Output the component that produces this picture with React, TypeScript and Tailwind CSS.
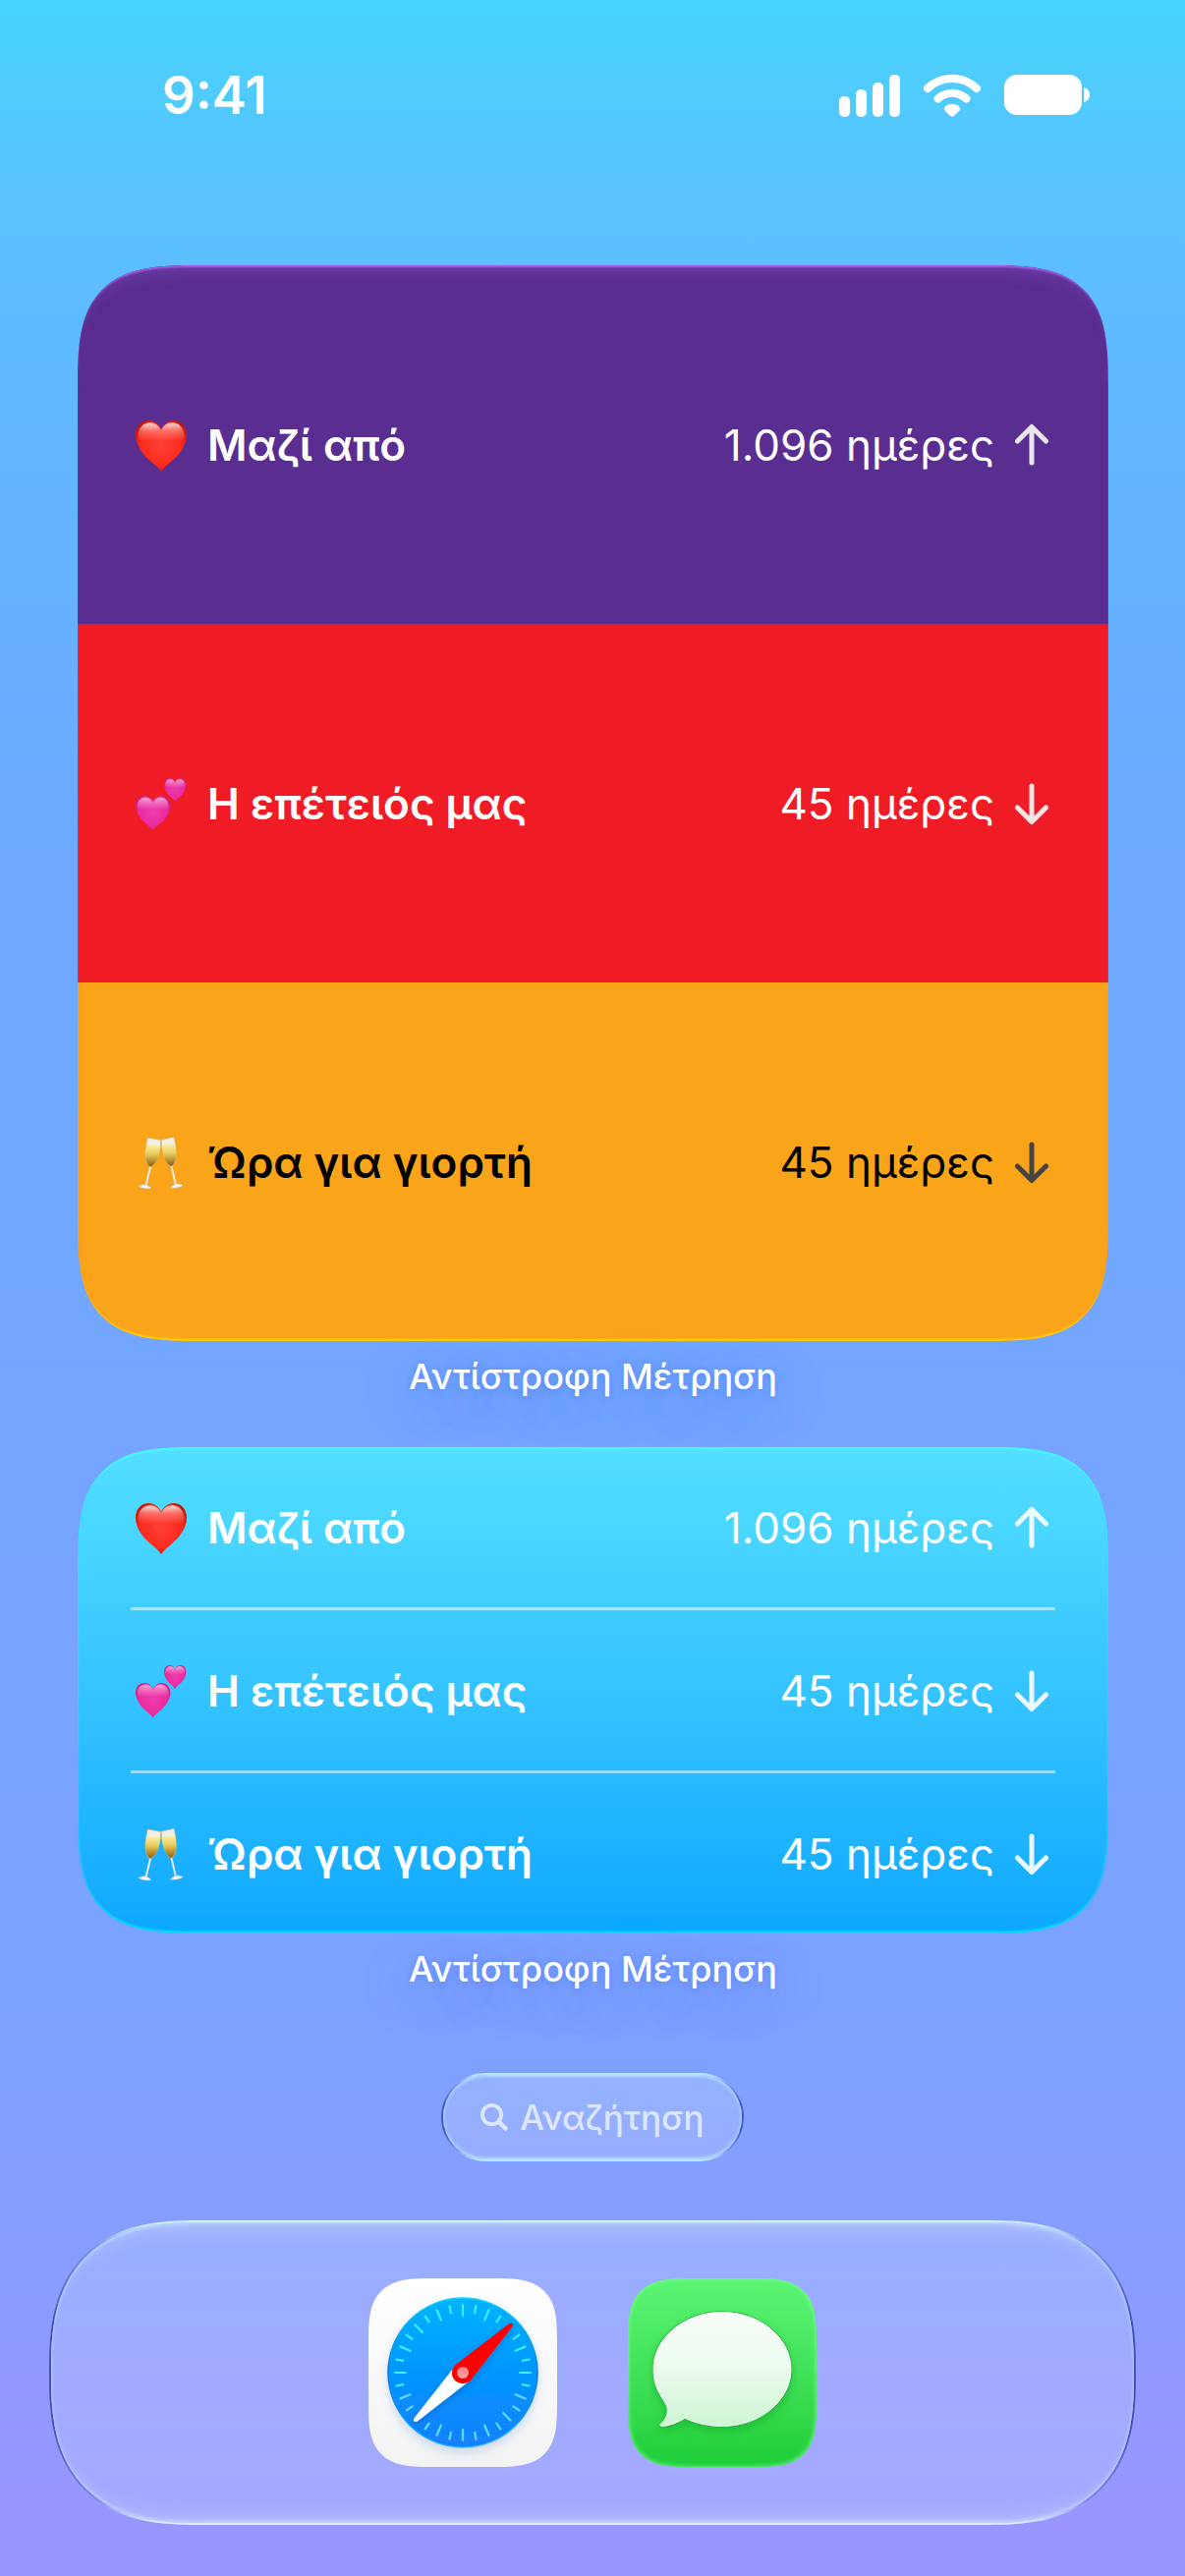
type Counter = {
  icon: "heart" | "hearts" | "toast";
  title: string;
  value: string;
  direction: "up" | "down";
  rowClass: string;
  arrowClass: string;
};

const counters: Counter[] = [
  {
    icon: "heart",
    title: "Μαζί από",
    value: "1.096 ημέρες",
    direction: "up",
    rowClass: "bg-[#5a2d91] text-white",
    arrowClass: "text-[#e9e6ec]",
  },
  {
    icon: "hearts",
    title: "Η επέτειός μας",
    value: "45 ημέρες",
    direction: "down",
    rowClass: "bg-[#ef1c25] text-white",
    arrowClass: "text-[#f3e4e6]",
  },
  {
    icon: "toast",
    title: "Ώρα για γιορτή",
    value: "45 ημέρες",
    direction: "down",
    rowClass: "bg-[#faa41a] text-black",
    arrowClass: "text-[#444444]",
  },
];

const HEART =
  "M26 52C22 45.5 14 42 7 33C2.5 27 0 21 0 14.5C0 6 6 0 13.5 0C19 0 23.5 3.5 26 9C28.5 3.5 33 0 38.5 0C46 0 52 6 52 14.5C52 21 49.5 27 45 33C38 42 30 45.5 26 52Z";

function Heart({ id, pink }: { id: string; pink?: boolean }) {
  return (
    <>
      <defs>
        <radialGradient id={`${id}-body`} cx="0.5" cy="0.48" r="0.62">
          <stop offset="0" stopColor={pink ? "#f03cab" : "#ff4136"} />
          <stop offset="0.65" stopColor={pink ? "#ea2ba0" : "#fb2a1c"} />
          <stop offset="1" stopColor={pink ? "#c4187d" : "#b80d00"} />
        </radialGradient>
        <linearGradient id={`${id}-shine`} x1="0" y1="0" x2="0" y2="1">
          <stop offset="0" stopColor="#fff" stopOpacity={pink ? 0.6 : 0.85} />
          <stop offset="0.18" stopColor="#fff" stopOpacity="0.3" />
          <stop offset="0.4" stopColor="#fff" stopOpacity="0" />
        </linearGradient>
      </defs>
      <path d={HEART} fill={`url(#${id}-body)`} />
      <path d={HEART} fill={`url(#${id}-shine)`} transform="translate(2.6 2.2) scale(0.9)" />
    </>
  );
}

function Glass({ id }: { id: string }) {
  return (
    <>
      <path d="M11 3L23 5.5C22.5 16 20 30 13.5 33C7.5 30 8.5 15 11 3Z" fill="#f1efe6" stroke="#c9b98a" strokeWidth="0.7" />
      <path d="M10.2 9.5C14 12 18 8.5 22.6 11C21.8 21 19 30.5 13.5 32.5C8 30 8.6 18 10.2 9.5Z" fill={`url(#${id})`} />
      <path d="M13.4 33L9.3 52" stroke="#e9e9ee" strokeWidth="1.8" />
      <path d="M2.5 52.5C5 51 7 50.5 9.5 51C12 52 13 53 14.5 54.5C10 55.5 5 54.5 2.5 52.5Z" fill="#f4f4f7" stroke="#b9b9c4" strokeWidth="0.5" />
    </>
  );
}

function Emoji({ name, id }: { name: Counter["icon"]; id: string }) {
  if (name === "heart") {
    return (
      <svg viewBox="0 0 56 56" className="size-14 shrink-0" aria-hidden="true">
        <g transform="translate(3 3)">
          <Heart id={id} />
        </g>
      </svg>
    );
  }
  if (name === "hearts") {
    return (
      <svg viewBox="0 0 56 56" className="size-14 shrink-0" aria-hidden="true">
        <g transform="translate(32 2) scale(0.43 0.46)">
          <Heart id={`${id}-small`} pink />
        </g>
        <g transform="translate(3 20) scale(0.68)">
          <Heart id={`${id}-big`} pink />
        </g>
      </svg>
    );
  }
  return (
    <svg viewBox="0 0 56 56" className="size-14 shrink-0" fill="none" aria-hidden="true">
      <defs>
        <linearGradient id={`${id}-wine`} x1="0" y1="0" x2="0" y2="1">
          <stop offset="0" stopColor="#fff3a8" />
          <stop offset="0.45" stopColor="#e6c95c" />
          <stop offset="1" stopColor="#8f5f0a" />
        </linearGradient>
      </defs>
      <g transform="matrix(1.12 0 0 1 3 0)">
        <Glass id={`${id}-wine`} />
      </g>
      <g transform="matrix(-1.08 0.03 0 1 54 -1)">
        <Glass id={`${id}-wine`} />
      </g>
    </svg>
  );
}

function Arrow({ direction, className }: { direction: "up" | "down"; className: string }) {
  return (
    <svg
      viewBox="0 0 44 44"
      className={`size-11 shrink-0 ${className}`}
      fill="none"
      stroke="currentColor"
      strokeWidth="5"
      strokeLinecap="round"
      strokeLinejoin="round"
      role="img"
      aria-label={direction}
    >
      {direction === "up" ? (
        <path d="M22 40V4M7.5 18L22 3.5L36.5 18" />
      ) : (
        <path d="M22 4V40M7.5 26L22 40.5L36.5 26" />
      )}
    </svg>
  );
}

function CounterRow({ counter, id, arrowClass }: { counter: Counter; id: string; arrowClass: string }) {
  return (
    <div className="flex flex-1 items-center justify-between px-14 text-[44px] leading-[56px]">
      <div className="flex items-center gap-5">
        <Emoji name={counter.icon} id={id} />
        <span className="font-semibold">{counter.title}</span>
      </div>
      <div className="flex items-center gap-4">
        <span>{counter.value}</span>
        <Arrow direction={counter.direction} className={arrowClass} />
      </div>
    </div>
  );
}

function WidgetLabel() {
  return (
    <h2 className="relative mt-3 text-center text-[36px] leading-12 font-medium text-white [text-shadow:0_1px_6px_rgba(40,100,230,0.3),0_14px_56px_rgba(30,110,255,0.42)]">
      Αντίστροφη Μέτρηση
    </h2>
  );
}

const widgetShape =
  "relative overflow-hidden rounded-[84px] supports-[corner-shape:squircle]:rounded-[126px] supports-[corner-shape:squircle]:[corner-shape:superellipse(1.65)]";

function StatusBar() {
  return (
    <header className="flex items-center justify-between pr-[96px] pl-[165px] text-white">
      <time className="py-16 text-[53px] leading-[66px] font-semibold">9:41</time>
      <div className="flex items-center gap-6">
        <svg viewBox="0 0 62 43" className="h-[43px] w-[62px]" fill="currentColor" aria-label="signal">
          <rect x="0" y="22" width="11" height="21" rx="5" />
          <rect x="17" y="15" width="11" height="28" rx="5" />
          <rect x="34" y="8" width="11" height="35" rx="5" />
          <rect x="51" y="0" width="11" height="43" rx="5" />
        </svg>
        <svg viewBox="0 0 58 43" className="h-[43px] w-[58px]" fill="none" aria-label="wifi">
          <path d="M4 14A36 36 0 0 1 54 14" stroke="currentColor" strokeWidth="8" strokeLinecap="round" />
          <path d="M14.5 24.5A21 21 0 0 1 43.5 24.5" stroke="currentColor" strokeWidth="8" strokeLinecap="round" />
          <path
            d="M29 30C33 30 36 31.5 37 34C37.5 35.5 36.5 36.5 35.5 37.5L31 41.8C29.7 43 28.3 43 27 41.8L22.5 37.5C21.5 36.5 20.5 35.5 21 34C22 31.5 25 30 29 30Z"
            fill="currentColor"
          />
        </svg>
        <svg viewBox="0 0 88 43" className="h-[43px] w-[88px]" fill="currentColor" aria-label="battery">
          <rect x="0" y="0" width="79" height="41" rx="13" />
          <path d="M81 13C85 14 87 17 87 20.5S85 27 81 28Z" />
        </svg>
      </div>
    </header>
  );
}

const ticks = Array.from({ length: 32 }, (_, i) => i).filter((i) => i !== 4 && i !== 20);

function SafariIcon() {
  return (
    <svg viewBox="0 0 192 192" className="size-full" aria-hidden="true">
      <defs>
        <linearGradient id="compass" x1="0" y1="0" x2="0" y2="1">
          <stop offset="0" stopColor="#00b4ff" />
          <stop offset="0.5" stopColor="#0096ff" />
          <stop offset="1" stopColor="#1580ff" />
        </linearGradient>
        <linearGradient id="compass-rim" x1="0" y1="0" x2="0" y2="1">
          <stop offset="0" stopColor="#12d8ff" />
          <stop offset="0.5" stopColor="#0672e0" />
          <stop offset="1" stopColor="#22b4ff" />
        </linearGradient>
        <linearGradient id="compass-hub" x1="0" y1="0" x2="0" y2="1">
          <stop offset="0" stopColor="#ff7d84" />
          <stop offset="1" stopColor="#ffa5a5" />
        </linearGradient>
        <filter id="compass-shadow" x="-20%" y="-20%" width="140%" height="140%">
          <feDropShadow dx="0" dy="5" stdDeviation="5" floodColor="#1a66d0" floodOpacity="0.2" />
        </filter>
        <filter id="needle-shadow" x="-20%" y="-20%" width="140%" height="140%">
          <feDropShadow dx="0" dy="3" stdDeviation="3" floodColor="#003a90" floodOpacity="0.3" />
        </filter>
      </defs>
      <circle cx="96" cy="96" r="76" fill="url(#compass)" stroke="url(#compass-rim)" strokeWidth="1.5" filter="url(#compass-shadow)" />
      {ticks.map((i) => (
        <line
          key={i}
          x1="96"
          y1="27"
          x2="96"
          y2={i % 2 === 0 ? 38 : 34}
          stroke={i > 9 && i < 23 ? "#62dbff" : "#3cf0ff"}
          strokeWidth="2.2"
          strokeLinecap="round"
          transform={`rotate(${i * 11.25} 96 96)`}
        />
      ))}
      <g filter="url(#needle-shadow)">
        <path d="M86 92L46.3 142.5C45 145 47 147 49.5 145.7L102 105Z" fill="#fdfeff" />
        <path d="M88.5 88L143 46.3C145.8 44.5 148 46.5 146.7 49L104.5 103A11 11 0 1 1 88.5 88Z" fill="#ff0000" />
      </g>
      <circle cx="96" cy="96" r="6" fill="url(#compass-hub)" />
    </svg>
  );
}

const BUBBLE =
  "M96 34.5C134.7 34.5 166 60.5 166 92.5S134.7 150.5 96 150.5C82 150.5 69 147.5 58 142.3C51 147 41 150.5 34 150.5C32.5 150.5 32.5 148.7 33.5 148C38 144.5 40.5 139 40.3 133.5C40 128 34 122 30 113C27 106 26 99 26 92.5C26 60.5 57.3 34.5 96 34.5Z";

function MessagesIcon() {
  return (
    <svg viewBox="0 0 192 192" className="size-full" aria-hidden="true">
      <defs>
        <linearGradient id="bubble" x1="0" y1="0" x2="0" y2="1">
          <stop offset="0" stopColor="#f7fdf8" />
          <stop offset="0.45" stopColor="#eefbf0" />
          <stop offset="1" stopColor="#cdf5d3" />
        </linearGradient>
        <filter id="bubble-shadow" x="-20%" y="-20%" width="140%" height="140%">
          <feDropShadow dx="0" dy="4" stdDeviation="5" floodColor="#0a8a20" floodOpacity="0.35" />
        </filter>
      </defs>
      <path d={BUBBLE} fill="url(#bubble)" stroke="#16a92c" strokeWidth="2" filter="url(#bubble-shadow)" />
      <path d={BUBBLE} fill="url(#bubble)" stroke="#fff" strokeWidth="1" />
    </svg>
  );
}

const appShape =
  "size-48 overflow-hidden rounded-[44px] supports-[corner-shape:squircle]:rounded-[66px] supports-[corner-shape:squircle]:[corner-shape:superellipse(1.65)]";

export default function App() {
  return (
    <div className="flex min-h-screen flex-col bg-linear-[180deg,#46d4fb_0%,#56c5ff_6%,#5fbcff_12%,#6aadff_27%,#73a5ff_53%,#7ba2ff_75%,#859eff_86%,#9a95ff_98%] font-['Inter','Liberation_Sans',sans-serif]">
      <StatusBar />

      <main className="mt-19 flex flex-col pr-[78px] pl-[79px]">
        <section className={widgetShape}>
          {counters.map((c) => (
            <div key={c.title} className={`flex min-h-[365px] ${c.rowClass}`}>
              <CounterRow counter={c} id={`large-${c.icon}`} arrowClass={c.arrowClass} />
            </div>
          ))}
          <div className="pointer-events-none absolute inset-0 rounded-[inherit] [corner-shape:inherit] shadow-[inset_0_3px_2px_-1px_#a65ff2,inset_0_-3px_2px_-1px_#ffd500,inset_0_16px_16px_-10px_rgba(150,100,200,0.35)]" />
        </section>
        <WidgetLabel />

        <section className={`mt-12 bg-linear-to-b from-[#53dfff] to-[#0aa8ff] text-white ${widgetShape}`}>
          {counters.map((c, i) => (
            <div key={c.title}>
              {i > 0 && <hr className="mx-[54px] border-t-3 border-white/50" />}
              <div className="flex min-h-[163px]">
                <CounterRow counter={c} id={`medium-${c.icon}`} arrowClass="text-white/90" />
              </div>
            </div>
          ))}
          <div className="pointer-events-none absolute inset-0 rounded-[inherit] [corner-shape:inherit] shadow-[inset_0_3px_2px_-1px_#48ffff,inset_0_-3px_2px_-1px_#00e4ff,inset_0_0_3px_rgba(60,240,255,0.8)]" />
        </section>
        <WidgetLabel />
      </main>

      <button
        type="button"
        className="mx-auto mt-[82px] flex h-[90px] items-center gap-3 rounded-full border-2 border-transparent px-[38px] text-[35px] font-medium text-[#dde6ff] shadow-[inset_0_2px_3px_#b4dcff,inset_0_-2px_3px_#b4dcff] [background:linear-gradient(#93b2ff,#98acff)_padding-box,linear-gradient(#b4e8ff_2%,#7f9ff5_12%,#4258c4_36%,#4258c4_64%,#7f96f5_88%,#b4e8ff_98%)_border-box]"
      >
        <svg viewBox="0 0 28 28" className="size-7" fill="none" stroke="currentColor" strokeLinecap="round" aria-hidden="true">
          <circle cx="11.5" cy="11.5" r="9.6" strokeWidth="3.8" />
          <path d="M19 19L25.5 25.5" strokeWidth="4.5" />
        </svg>
        Αναζήτηση
      </button>

      <nav className="mx-[50px] mt-15 mb-[51px] flex h-[310px] items-center justify-center gap-18 rounded-[120px] border-2 border-transparent shadow-[inset_0_2px_3px_#b9d4ff,inset_0_-2px_3px_#c4ceff,inset_0_20px_20px_-16px_rgba(255,255,255,0.35),inset_0_-20px_20px_-16px_rgba(255,255,255,0.3)] [background:linear-gradient(#98aeff,#a5a8ff)_padding-box,linear-gradient(#d4efff_1%,#7d96f0_8%,#4652b8_34%,#4652b8_66%,#7d88ee_92%,#dcecff_99%)_border-box] supports-[corner-shape:squircle]:rounded-[150px] supports-[corner-shape:squircle]:[corner-shape:superellipse(1.35)]">
        <a href="#safari" aria-label="Safari" className={`bg-linear-to-b from-white to-[#f3f3f4] ${appShape}`}>
          <SafariIcon />
        </a>
        <a
          href="#messages"
          aria-label="Messages"
          className={`bg-linear-to-b from-[#5bf675] to-[#1dcd38] shadow-[inset_0_0_4px_1px_rgba(130,255,150,0.7)] ${appShape}`}
        >
          <MessagesIcon />
        </a>
      </nav>
    </div>
  );
}
